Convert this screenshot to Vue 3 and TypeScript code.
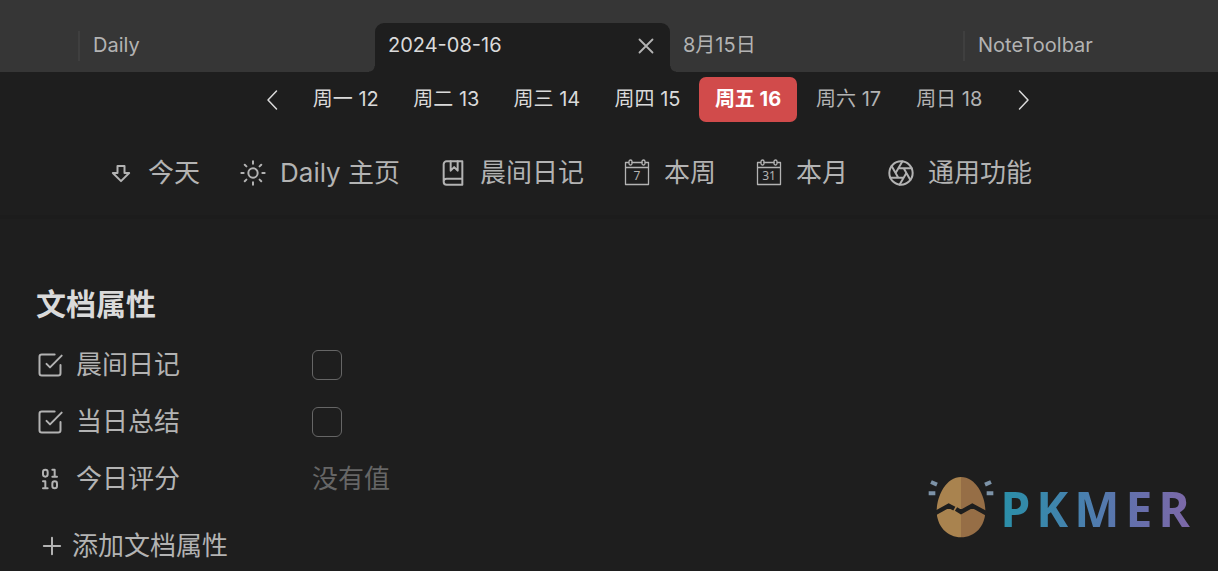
<script setup lang="ts">
import { ref } from 'vue'

interface Tab { title: string; active?: boolean; divider?: boolean }
interface Day { label: string; state: 'past' | 'today' | 'future' }
interface Tool { label: string; icon: string; day?: string }
interface Property { id: string; label: string; kind: 'checkbox' | 'number' }

const tabs: Tab[] = [
  { title: 'Daily', divider: true },
  { title: '2024-08-16', active: true },
  { title: '8月15日' },
  { title: 'NoteToolbar', divider: true },
]

const days: Day[] = [
  { label: '周一 12', state: 'past' },
  { label: '周二 13', state: 'past' },
  { label: '周三 14', state: 'past' },
  { label: '周四 15', state: 'past' },
  { label: '周五 16', state: 'today' },
  { label: '周六 17', state: 'future' },
  { label: '周日 18', state: 'future' },
]

const tools: Tool[] = [
  { label: '今天', icon: 'down' },
  { label: 'Daily 主页', icon: 'sun' },
  { label: '晨间日记', icon: 'book' },
  { label: '本周', icon: 'calendar', day: '7' },
  { label: '本月', icon: 'calendar', day: '31' },
  { label: '通用功能', icon: 'aperture' },
]

const properties: Property[] = [
  { id: 'morning', label: '晨间日记', kind: 'checkbox' },
  { id: 'summary', label: '当日总结', kind: 'checkbox' },
  { id: 'score', label: '今日评分', kind: 'number' },
]

const checked = ref<Record<string, boolean>>({ morning: false, summary: false })
const score = ref('')
const brand = ['P', 'K', 'M', 'E', 'R']
</script>

<template>
  <div class="app">
    <header class="tabs">
      <div v-for="tab in tabs" :key="tab.title" class="tab" :class="{ active: tab.active, divider: tab.divider }">
        <a class="tab-title" href="#">{{ tab.title }}</a>
        <button v-if="tab.active" class="close" type="button" aria-label="Close">
          <svg viewBox="0 0 24 24" class="icon"><path d="M18 6 6 18M6 6l12 12" /></svg>
        </button>
      </div>
    </header>

    <nav class="week">
      <button class="step" type="button" aria-label="Previous week">
        <svg viewBox="0 0 12 22"><path d="M10.500 2 2 11l8.500 9" /></svg>
      </button>
      <div class="days">
        <button v-for="day in days" :key="day.label" type="button" class="day" :class="day.state">{{ day.label }}</button>
      </div>
      <button class="step" type="button" aria-label="Next week">
        <svg viewBox="0 0 12 22"><path d="M1.500 2 10 11l-8.500 9" /></svg>
      </button>
    </nav>

    <nav class="toolbar">
      <a v-for="tool in tools" :key="tool.label" class="tool" href="#">
        <svg v-if="tool.icon === 'down'" class="icon" viewBox="0 0 24 24">
          <path d="M15 6v6h4l-7 7-7-7h4V6z" />
        </svg>
        <svg v-else-if="tool.icon === 'sun'" class="icon" viewBox="0 0 24 24">
          <circle cx="12" cy="12" r="4" />
          <path d="M12 2v2M12 20v2M4.930 4.930l1.410 1.410M17.660 17.660l1.410 1.410M2 12h2M20 12h2M6.340 17.660l-1.410 1.410M19.070 4.930l-1.410 1.410" />
        </svg>
        <svg v-else-if="tool.icon === 'book'" class="icon" viewBox="0 0 24 24">
          <path d="M4 19.500v-15A2.500 2.500 0 0 1 6.500 2H20v20H6.500a2.500 2.500 0 0 1 0-5H20" />
          <path d="M10 2v8l3-3 3 3V2" />
        </svg>
        <svg v-else-if="tool.icon === 'calendar'" class="icon calendar" viewBox="0 0 28 28">
          <path d="M5.500 3.500h-3v22h23v-22h-3M9 3.500h10M2.500 8.500h23" />
          <rect x="6" y="1" width="3" height="5" rx="1.500" />
          <rect x="19" y="1" width="3" height="5" rx="1.500" />
          <text x="14" y="21">{{ tool.day }}</text>
        </svg>
        <svg v-else class="icon" viewBox="0 0 24 24">
          <circle cx="12" cy="12" r="10" />
          <path d="m14.310 8 5.740 9.940M9.690 8h11.480M7.380 12l5.740-9.940M9.690 16 3.950 6.060M14.310 16H2.830M16.620 12l-5.740 9.940" />
        </svg>
        <span>{{ tool.label }}</span>
      </a>
    </nav>

    <main class="note">
      <h2>文档属性</h2>
      <div v-for="item in properties" :key="item.id" class="property">
        <label class="key" :for="item.id">
          <svg v-if="item.kind === 'checkbox'" class="icon" viewBox="0 0 24 24">
            <path d="m9 11 3 3L22 4" />
            <path d="M21 12v7a2 2 0 0 1-2 2H5a2 2 0 0 1-2-2V5a2 2 0 0 1 2-2h11" />
          </svg>
          <svg v-else class="icon" viewBox="0 0 24 24">
            <rect x="14" y="14" width="4" height="6" rx="2" />
            <rect x="6" y="4" width="4" height="6" rx="2" />
            <path d="M6 20h4M14 10h4M6 14h2v6M14 4h2v6" />
          </svg>
          <span>{{ item.label }}</span>
        </label>
        <input v-if="item.kind === 'checkbox'" :id="item.id" v-model="checked[item.id]" type="checkbox" class="check">
        <input v-else :id="item.id" v-model="score" type="text" inputmode="decimal" class="value" placeholder="没有值">
      </div>
      <button class="add" type="button">
        <svg class="icon" viewBox="0 0 24 24"><path d="M5 12h14M12 5v14" /></svg>
        <span>添加文档属性</span>
      </button>
    </main>

    <div class="brand">
      <svg class="egg" viewBox="50 30 204 192">
        <path class="shell-left" d="M152 36C108 36 79 92 79 138c0 46 32 79 73 79z" />
        <path class="shell-right" d="M152 36c44 0 73 56 73 102 0 46-32 79-73 79z" />
        <path class="crack" d="M72 146 115 122l17 9M137 132l15 9 34-19 46 25" />
        <path class="rays" d="M62 51l18 8M55 85h20M242 51l-18 8M249 85h-20" />
      </svg>
      <div class="wordmark"><span v-for="letter in brand" :key="letter">{{ letter }}</span></div>
    </div>
  </div>
</template>

<style>
body {
  margin: 0;
  background: #1e1e1e;
}
</style>

<style scoped>
.app {
  position: relative;
  min-height: 100vh;
  box-sizing: border-box;
  overflow: hidden;
  background: #1e1e1e;
  color: #b3b3b3;
  font-family: Inter, "Noto Sans CJK SC", sans-serif;
  font-size: 26px;
  line-height: 36px;
}
a {
  color: inherit;
  text-decoration: none;
}
button {
  padding: 0;
  border: 0;
  background: none;
  color: inherit;
  font: inherit;
  cursor: pointer;
}
svg {
  display: block;
  flex: none;
  fill: none;
  stroke: currentColor;
  stroke-linecap: round;
  stroke-linejoin: round;
}
.icon {
  width: 28px;
  height: 28px;
  stroke-width: 1.7;
}
.tabs {
  display: flex;
  height: 72px;
  padding: 23px 0 0 80px;
  box-sizing: border-box;
  background: #363636;
  font-size: 20px;
  line-height: 28px;
}
.tab {
  position: relative;
  display: flex;
  flex: 0 0 295px;
  align-items: center;
  justify-content: space-between;
  box-sizing: border-box;
  padding: 0 10px 4px 13px;
}
.tab-title {
  padding-bottom: 2px;
}
.tab.divider::before {
  content: "";
  position: absolute;
  top: 8px;
  left: -2px;
  width: 2px;
  height: 30px;
  background: #3f3f3f;
}
.tab.active {
  border-radius: 9px 9px 0 0;
  background: #1e1e1e;
  color: #dadada;
}
.tab.active::before,
.tab.active::after {
  content: "";
  position: absolute;
  bottom: 0;
  width: 6px;
  height: 6px;
}
.tab.active::before {
  right: 100%;
  background: radial-gradient(circle at 0 0, transparent 5px, #1e1e1e 6px);
}
.tab.active::after {
  left: 100%;
  background: radial-gradient(circle at 100% 0, transparent 5px, #1e1e1e 6px);
}
.close {
  color: #b3b3b3;
}
.close .icon {
  width: 26px;
  height: 26px;
  margin-right: 1px;
}
.week {
  display: flex;
  align-items: center;
  justify-content: center;
  gap: 18px;
  padding: 5px 0 0 77px;
  font-size: 20px;
  line-height: 28px;
}
.step {
  color: #dadada;
}
.step svg {
  width: 12px;
  height: 22px;
  stroke-width: 1.5;
}
.days {
  display: grid;
  flex: 0 1 704px;
  grid-template-columns: repeat(7, 1fr);
}
.day {
  height: 45px;
  margin: 0 1px;
  padding-bottom: 2px;
  border-radius: 7px;
  color: #dadada;
  white-space: nowrap;
}
.day.today {
  background: #d14b4b;
  color: #fff;
  font-weight: 700;
}
.day.future {
  color: #b3b3b3;
}
.toolbar {
  display: flex;
  gap: 38px;
  padding: 33px 0 24px 107px;
  border-bottom: 4px solid #1c1c1c;
}
.tool {
  display: flex;
  align-items: center;
  gap: 13px;
  margin-right: 1px;
  white-space: nowrap;
}
.calendar {
  stroke-width: 1.3;
}
.calendar text {
  fill: currentColor;
  stroke: none;
  font-family: "Noto Sans", sans-serif;
  font-size: 12px;
  text-anchor: middle;
}
.note {
  padding: 63px 36px 0;
}
h2 {
  margin: 0 0 10px;
  color: #dadada;
  font-size: 30px;
  font-weight: 600;
  line-height: 44px;
}
.property {
  display: flex;
  align-items: center;
  height: 57px;
}
.key {
  display: flex;
  flex: 0 0 276px;
  align-items: center;
  gap: 12px;
}
.check {
  width: 30px;
  height: 30px;
  margin: 0;
  appearance: none;
  border: 1px solid #666;
  border-radius: 6px;
}
.check:checked {
  background: #d14b4b;
}
.value {
  flex: 1;
  min-width: 0;
  padding: 0;
  border: 0;
  outline: 0;
  background: none;
  color: inherit;
  font: inherit;
}
.value::placeholder {
  color: #666;
  opacity: 1;
}
.add {
  display: flex;
  align-items: center;
  gap: 6px;
  margin: 21px 0 0 2px;
}
.brand {
  position: absolute;
  right: 28px;
  bottom: 32px;
  display: flex;
  align-items: center;
  gap: 5px;
}
.egg {
  width: 68px;
  height: 64px;
}
.shell-left {
  fill: #a9834f;
  stroke: none;
}
.shell-right {
  fill: #966e46;
  stroke: none;
}
.crack {
  stroke: #1e1e1e;
  stroke-width: 13;
  stroke-linecap: butt;
  stroke-linejoin: miter;
}
.rays {
  stroke: #7d93a8;
  stroke-width: 12;
  stroke-linecap: butt;
}
.wordmark {
  display: flex;
  gap: 6px;
  padding-top: 3px;
  background: linear-gradient(90deg, #2a8fa8, #4a7fae 45%, #6470ac 70%, #7d68a8);
  background-clip: text;
  color: transparent;
  font-family: "Open Sans", sans-serif;
  font-size: 48px;
  font-weight: 700;
  line-height: 60px;
}
</style>
